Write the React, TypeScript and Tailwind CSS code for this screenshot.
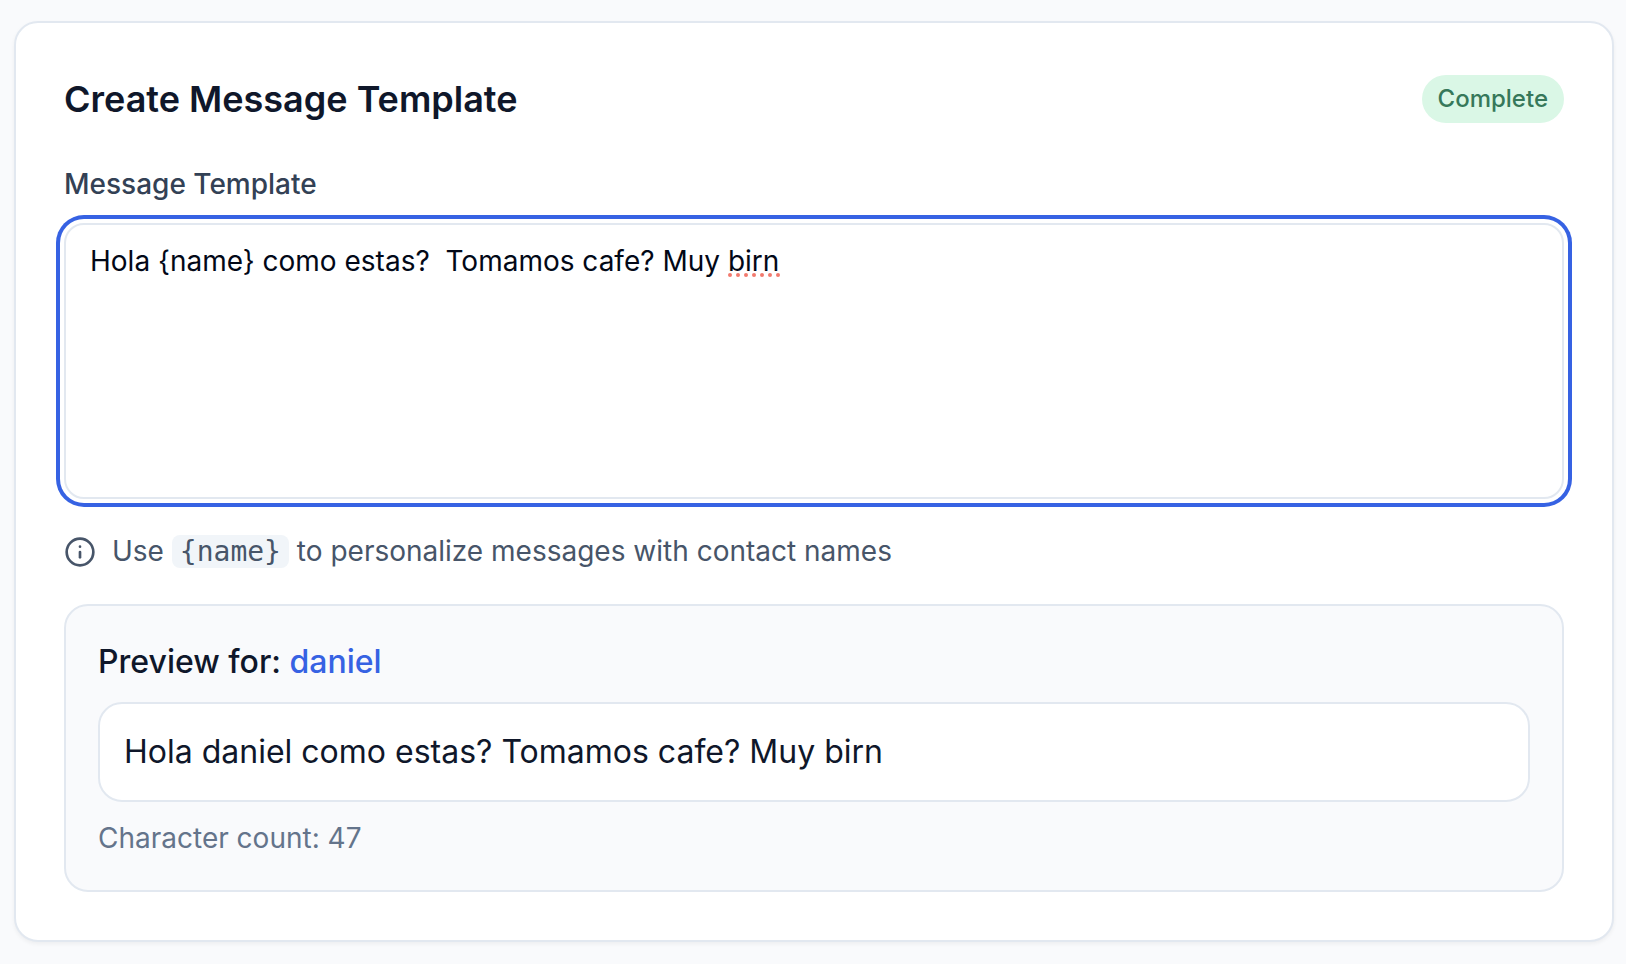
import { useState } from "react";
import { Info } from "lucide-react";

const contact = "daniel";

export default function App() {
  const [template, setTemplate] = useState(
    "Hola {name} como estas?  Tomamos cafe? Muy birn"
  );
  const preview = template.replaceAll("{name}", contact);

  return (
    <main className="min-h-screen bg-[#f9fafc] pt-[21px] pr-3 pb-[22px] pl-3.5 font-['Inter','Liberation_Sans',sans-serif] text-[#0f172a] [font-optical-sizing:none]">
      <section className="rounded-3xl border-2 border-[#e2e8f0] bg-white p-12 shadow-[0_2px_4px_rgba(0,0,0,0.05)]">
        <header className="mb-8 flex items-center justify-between">
          <h1 className="text-4xl leading-[56px] font-semibold">
            Create Message Template
          </h1>
          <span className="rounded-full bg-[#daf7e6] px-4 text-2xl leading-[48px] font-medium text-[#36785a]">
            Complete
          </span>
        </header>

        <label
          htmlFor="template"
          className="mb-3.5 block text-[28px] leading-[50px] font-medium text-[#334155]"
        >
          Message Template
        </label>
        <div className="relative">
          <textarea
            id="template"
            spellCheck={false}
            value={template}
            onChange={(e) => setTemplate(e.target.value)}
            className="block h-[276px] w-full resize-none rounded-[20px] border-2 border-[#e2e8f0] bg-white px-6 py-4 text-[28px] leading-[40px] text-[#020817] ring-4 ring-[#3662e3] ring-offset-4 ring-offset-white outline-none"
          />
          <svg
            aria-hidden="true"
            className="pointer-events-none absolute top-[50px] left-[664px] h-1 w-[52px]"
            viewBox="0 0 52 4"
            fill="#f27a6e"
          >
            {[2, 10, 18, 26, 34, 42, 50].map((x) => (
              <circle key={x} cx={x} cy="2" r="2" />
            ))}
          </svg>
        </div>

        <div className="mt-8 flex items-center gap-4 text-[28px] leading-[41px] text-[#475569]">
          <Info className="size-8 shrink-0" />
          <p>
            Use{" "}
            <code className="rounded-lg bg-[#f1f5f9] px-2 font-['DejaVu_Sans_Mono',monospace]">
              {"{name}"}
            </code>{" "}
            to personalize messages with contact names
          </p>
        </div>

        <section className="mt-8 rounded-3xl border-2 border-[#e2e8f0] bg-[#f9fafc] p-8">
          <h2 className="mb-4 text-[32px] leading-[48px] font-medium">
            Preview for: <span className="text-[#3662e3]">{contact}</span>
          </h2>
          <p className="mb-4 rounded-3xl border-2 border-[#e2e8f0] bg-white p-6 text-[32px] leading-[48px]">
            {preview}
          </p>
          <p className="text-[28px] leading-[40px] text-[#64748b]">
            Character count: {template.length}
          </p>
        </section>
      </section>
    </main>
  );
}
